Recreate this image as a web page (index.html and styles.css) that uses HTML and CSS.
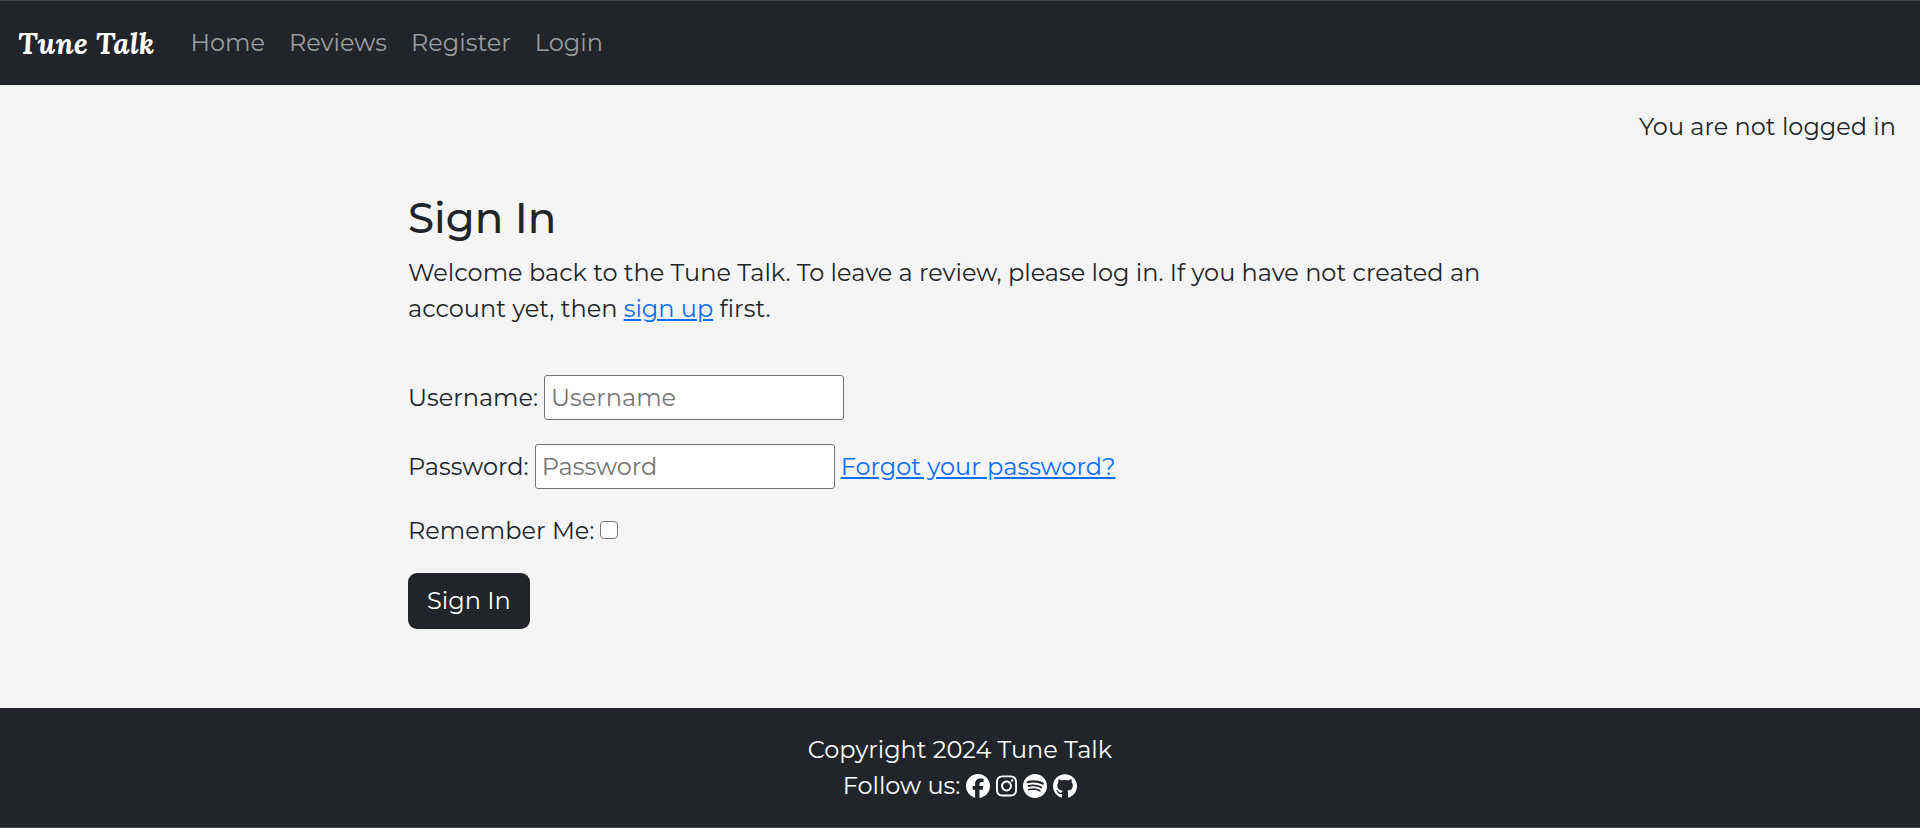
FILE: index.html
```html
<!DOCTYPE html>
<html lang="en">
<head>
<meta charset="utf-8">
<meta name="viewport" content="width=device-width, initial-scale=1">
<title>Tune Talk - Sign In</title>
<link rel="stylesheet" href="styles.css">
</head>
<body>
<header class="navbar">
  <a class="brand" href="#">Tune Talk</a>
  <nav class="nav-links">
    <a href="#">Home</a>
    <a href="#">Reviews</a>
    <a href="#">Register</a>
    <a href="#">Login</a>
  </nav>
</header>
<p class="status">You are not logged in</p>
<main class="content">
  <h1 class="title">Sign In</h1>
  <p class="intro">Welcome back to the Tune Talk. To leave a review, please log in. If you have not created an account yet, then <a class="link" href="#">sign up</a> first.</p>
  <form class="login">
    <div class="field">
      <label for="username">Username:</label>
      <input class="text-input" id="username" type="text" placeholder="Username">
    </div>
    <div class="field">
      <label for="password">Password:</label>
      <input class="text-input" id="password" type="password" placeholder="Password">
      <a class="link" href="#">Forgot your password?</a>
    </div>
    <div class="field">
      <label for="remember">Remember Me:</label>
      <input class="check" id="remember" type="checkbox">
    </div>
    <button class="submit" type="submit">Sign In</button>
  </form>
</main>
<footer class="footer">
  <div>Copyright 2024 Tune Talk</div>
  <div class="social">
    <span>Follow us:</span>
    <a href="#" aria-label="Facebook"><svg class="icon" viewBox="0 0 512 512"><path d="M512 256C512 114.6 397.4 0 256 0S0 114.6 0 256C0 376 82.7 476.8 194.2 504.5V334.2H141.4V256h52.8V222.3c0-87.1 39.4-127.5 125-127.5c16.2 0 44.2 3.2 55.7 6.4V172c-6-.6-16.5-1-29.6-1c-42 0-58.2 15.9-58.2 57.2V256h83.6l-14.4 78.2H287V510.1C413.8 494.8 512 386.9 512 256z"/></svg></a>
    <a href="#" aria-label="Instagram"><svg class="icon" viewBox="0 0 448 512"><path d="M224.1 141c-63.6 0-114.9 51.3-114.9 114.9s51.3 114.9 114.9 114.9S339 319.5 339 255.9 287.7 141 224.1 141zm0 189.6c-41.1 0-74.7-33.5-74.7-74.7s33.5-74.7 74.7-74.7 74.7 33.5 74.7 74.7-33.6 74.7-74.7 74.7zm146.4-194.3c0 14.9-12 26.8-26.8 26.8-14.9 0-26.8-12-26.8-26.8s12-26.8 26.8-26.8 26.8 12 26.8 26.8zm76.1 27.2c-1.7-35.9-9.9-67.7-36.2-93.9-26.2-26.2-58-34.4-93.9-36.2-37-2.1-147.9-2.1-184.9 0-35.8 1.7-67.6 9.9-93.9 36.1s-34.4 58-36.2 93.9c-2.1 37-2.1 147.9 0 184.9 1.7 35.9 9.9 67.7 36.2 93.9s58 34.4 93.9 36.2c37 2.1 147.9 2.1 184.9 0 35.9-1.7 67.7-9.9 93.9-36.2 26.2-26.2 34.4-58 36.2-93.9 2.1-37 2.1-147.8 0-184.8zM398.8 388c-7.8 19.6-22.9 34.7-42.6 42.6-29.5 11.7-99.5 9-132.1 9s-102.7 2.6-132.1-9c-19.6-7.8-34.7-22.9-42.6-42.6-11.7-29.5-9-99.5-9-132.1s-2.6-102.7 9-132.1c7.8-19.6 22.9-34.7 42.6-42.6 29.5-11.7 99.5-9 132.1-9s102.7-2.6 132.1 9c19.6 7.8 34.7 22.9 42.6 42.6 11.7 29.5 9 99.5 9 132.1s2.7 102.7-9 132.1z"/></svg></a>
    <a href="#" aria-label="Spotify"><svg class="icon" viewBox="0 8 496 496"><path d="M248 8C111.1 8 0 119.1 0 256s111.1 248 248 248 248-111.1 248-248S384.9 8 248 8zm100.7 364.9c-4.2 0-6.8-1.3-10.7-3.6-62.4-37.6-135-39.2-206.7-24.5-3.9 1-9 2.6-11.9 2.6-9.7 0-15.8-7.7-15.8-15.8 0-10.3 6.1-15.2 13.6-16.8 81.9-18.1 165.6-16.5 237 26.2 6.1 3.9 9.7 7.4 9.7 16.5s-7.1 15.4-15.2 15.4zm26.9-65.6c-5.2 0-8.7-2.3-12.3-4.2-62.5-37-155.7-51.9-238.6-29.4-4.8 1.3-7.4 2.6-11.9 2.6-10.7 0-19.4-8.7-19.4-19.4s5.2-17.8 15.5-20.7c27.8-7.8 56.2-13.6 97.8-13.6 64.9 0 127.6 16.1 177 45.5 8.1 4.8 11.3 11 11.3 19.7-.1 10.8-8.5 19.5-19.4 19.5zm31-76.2c-5.2 0-8.4-1.3-12.9-3.9-71.2-42.5-198.5-52.7-280.9-29.7-3.6 1-8.1 2.6-12.9 2.6-13.2 0-23.3-10.3-23.3-23.6 0-13.6 8.4-21.3 17.4-23.9 35.2-10.3 74.6-15.2 117.5-15.2 73 0 149.5 15.2 205.4 47.8 7.8 4.5 12.9 10.7 12.9 22.6 0 13.6-11 23.3-23.2 23.3z"/></svg></a>
    <a href="#" aria-label="GitHub"><svg class="icon" viewBox="0 4 496 496"><path d="M165.9 397.4c0 2-2.3 3.6-5.2 3.6-3.3.3-5.6-1.3-5.6-3.6 0-2 2.3-3.6 5.2-3.6 3-.3 5.6 1.3 5.6 3.6zM244.8 8C106.1 8 0 113.3 0 252c0 110.9 69.8 205.8 169.5 239.2 12.8 2.3 17.3-5.6 17.3-12.1 0-6.2-.3-40.4-.3-61.4 0 0-70 15-84.7-29.8 0 0-11.4-29.1-27.8-36.6 0 0-22.9-15.7 1.6-15.4 0 0 24.9 2 38.6 25.8 21.9 38.6 58.6 27.5 72.9 20.9 2.3-16 8.8-27.1 16-33.7-55.9-6.2-112.3-14.3-112.3-110.5 0-27.5 7.6-41.3 23.6-58.9-2.6-6.5-11.1-33.3 2.6-67.9 20.9-6.5 69 27 69 27 20-5.6 41.5-8.5 62.8-8.5s42.8 2.9 62.8 8.5c0 0 48.1-33.6 69-27 13.7 34.7 5.2 61.4 2.6 67.9 16 17.7 25.8 31.5 25.8 58.9 0 96.5-58.9 104.2-114.8 110.5 9.2 7.9 17 22.9 17 46.4 0 33.7-.3 75.4-.3 83.6 0 6.5 4.6 14.4 17.3 12.1C428.2 457.8 496 362.9 496 252 496 113.3 383.5 8 244.8 8z"/></svg></a>
  </div>
</footer>
</body>
</html>
```
FILE: styles.css
```css
* {
  box-sizing: border-box;
}

body {
  margin: 0;
  min-height: 100vh;
  display: flex;
  flex-direction: column;
  background: #f5f5f5;
  color: #212529;
  font-family: Montserrat, Inter, "Open Sans", sans-serif;
  font-size: 24px;
  font-weight: 400;
  line-height: 36px;
}

.navbar {
  display: flex;
  align-items: center;
  gap: 36px;
  padding: 24px 18px;
  background: #212529;
  border-top: 1px solid #47494d;
}

.brand {
  color: #fff;
  font-family: Lora, "Liberation Serif", serif;
  font-size: 30px;
  font-style: italic;
  font-weight: 700;
  text-decoration: none;
}

.nav-links {
  display: flex;
  gap: 24px;
}

.nav-links a {
  color: #9b9d9e;
  text-decoration: none;
}

.status {
  margin: 0;
  padding: 24px 24px 0;
  text-align: right;
}

.content {
  flex: 1;
  width: 100%;
  max-width: 1104px;
  margin: 0 auto;
  padding: 48px 0;
}

.title {
  margin: 0 0 12px;
  font-size: 42px;
  font-weight: 500;
  line-height: 50px;
}

.intro {
  margin: 0 0 48px;
}

.link {
  color: #0d6efd;
  text-decoration: underline;
}

.login {
  display: flex;
  flex-direction: column;
  align-items: flex-start;
  gap: 24px;
}

.field {
  display: flex;
  align-items: center;
  gap: 6px;
}

.text-input {
  width: 300px;
  height: 45px;
  padding: 0 6px;
  border: 1px solid #767676;
  border-radius: 3px;
  background: #fff;
  color: #212529;
  font: inherit;
}

.text-input::placeholder {
  color: #757575;
}

.check {
  appearance: none;
  width: 18px;
  height: 18px;
  margin: 0 0 3px;
  border: 1px solid #767676;
  border-radius: 4px;
  background: #fff;
}

.check:checked {
  border-color: #0d6efd;
  background: #0d6efd;
}

.submit {
  padding: 10px 19px;
  border: 0;
  border-radius: 9px;
  background: #212529;
  color: #fff;
  font: inherit;
}

.footer {
  padding: 24px 24px 23px;
  background: #212529;
  border-bottom: 1px solid #47494d;
  color: #fff;
  text-align: center;
}

.social {
  display: flex;
  justify-content: center;
  align-items: center;
  gap: 6px;
}

.social a {
  display: flex;
}

.icon {
  height: 24px;
  fill: #fff;
}
```
